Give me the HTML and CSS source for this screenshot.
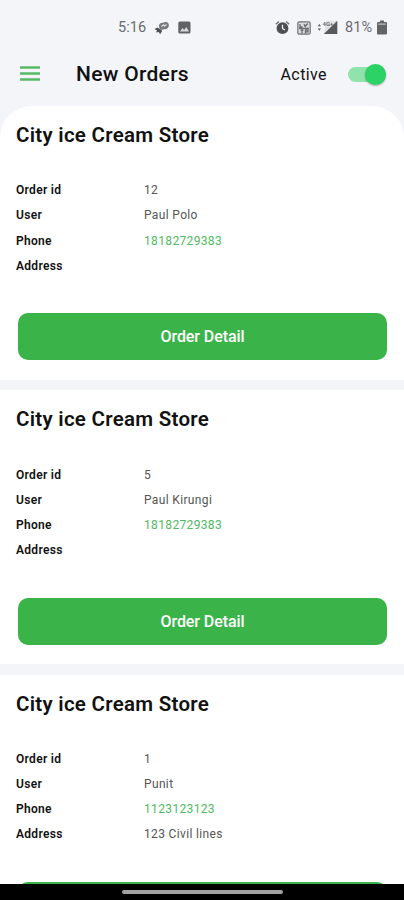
FILE: index.html
```html
<!DOCTYPE html>
<html lang="en">
<head>
<meta charset="utf-8">
<meta name="viewport" content="width=device-width, initial-scale=1">
<title>New Orders</title>
<link rel="stylesheet" href="styles.css">
</head>
<body>
<div class="screen">
  <div class="status">
    <div class="status-left">
      <span class="clock">5:16</span>
      <svg class="ico-leaf" width="16" height="14" viewBox="0 0 16 14">
        <path d="M5 4.500Q5.500 1.500 9 1.800L12 .8Q15.500 2 14.800 5.500Q13.500 8.500 10 8.200L7.500 9Q5 8 5 4.500Z" fill="#77797c"/>
        <path d="M7.500 5.500L9.500 3.800L10.500 5L12.500 3.500" fill="none" stroke="#d8dade" stroke-width="1.300"/>
        <path d="M.5 8L3.500 6.500L7.500 9L8 10.500L6 13.300L4.800 11L2 11.500L3 9.500Z" fill="#4f5255"/>
      </svg>
      <svg class="ico-image" width="13" height="13" viewBox="0 0 13 13">
        <rect x=".3" y=".5" width="12.200" height="12" rx="1.500" fill="#606366"/>
        <path d="M2 10.500L4.500 7L6.200 9L8.300 6L11 10.500Z" fill="#d8dade"/>
      </svg>
    </div>
    <div class="status-right">
      <svg width="15" height="15" viewBox="0 0 15 15">
        <circle cx="7.500" cy="8.200" r="5.900" fill="#4d4f52"/>
        <path d="M.8 4.200L4 1.400M14.200 4.200L11 1.400" stroke="#6a6c6f" stroke-width="1.300"/>
        <path d="M7.500 4.800V8.500L10 10" fill="none" stroke="#f0f2f6" stroke-width="1.300"/>
      </svg>
      <svg class="ico-lte" width="14" height="14" viewBox="0 0 14 14">
        <rect x=".8" y=".8" width="12.400" height="12.400" rx="1.500" fill="#d9dbdf" stroke="#707376" stroke-width="1.200"/>
        <path d="M3 3V6H5.500M7 3L8.200 5.500L10.800 2.500M2 7.300H12M3.500 9H6.500M5 9V12.500M8.500 12.500V9H11V10.800H8.500" fill="none" stroke="#696c6f" stroke-width="1.300"/>
      </svg>
      <svg class="ico-signal" width="21" height="15" viewBox="0 0 21 15">
        <path d="M.7 6.300H4L2.400 4ZM.7 8.500H4L2.400 10.800Z" fill="#55575a"/>
        <path d="M6.800 14L20.300 .8H9Z" fill="#dfe1e5"/>
        <path d="M20.300 .8V14H6.800Z" fill="#56585b"/>
        <text x="5.500" y="5.800" class="net">4G+</text>
      </svg>
      <span class="percent">81%</span>
      <svg class="ico-battery" width="10" height="15" viewBox="0 0 10 15">
        <path d="M3 .5H7V2H9Q10 2 10 3V13.500Q10 14.500 9 14.500H1Q0 14.500 0 13.500V3Q0 2 1 2H3Z" fill="#626467"/>
        <path d="M1.200 3.300H8.800V5H1.200Z" fill="#a6a8ab"/>
      </svg>
    </div>
  </div>
  <header class="appbar">
    <svg class="menu" width="20" height="15" viewBox="0 0 20 15">
      <path d="M0 1.500H20M0 7.500H20M0 13.500H20" stroke="#55b965" stroke-width="2.300"/>
    </svg>
    <h1>New Orders</h1>
    <span class="active">Active</span>
    <span class="switch"><span class="thumb"></span></span>
  </header>
  <main class="orders">
    <section class="card">
      <h2>City ice Cream Store</h2>
      <dl>
        <dt>Order id</dt><dd>12</dd>
        <dt>User</dt><dd>Paul Polo</dd>
        <dt>Phone</dt><dd class="phone">18182729383</dd>
        <dt>Address</dt><dd></dd>
      </dl>
      <button type="button">Order Detail</button>
    </section>
    <section class="card">
      <h2>City ice Cream Store</h2>
      <dl>
        <dt>Order id</dt><dd>5</dd>
        <dt>User</dt><dd>Paul Kirungi</dd>
        <dt>Phone</dt><dd class="phone">18182729383</dd>
        <dt>Address</dt><dd></dd>
      </dl>
      <button type="button">Order Detail</button>
    </section>
    <section class="card">
      <h2>City ice Cream Store</h2>
      <dl>
        <dt>Order id</dt><dd>1</dd>
        <dt>User</dt><dd>Punit</dd>
        <dt>Phone</dt><dd class="phone">1123123123</dd>
        <dt>Address</dt><dd>123 Civil lines</dd>
      </dl>
      <button type="button"></button>
    </section>
  </main>
  <div class="navbar"><span class="handle"></span></div>
</div>
</body>
</html>
```
FILE: styles.css
```css
* { box-sizing: border-box; }
body { margin: 0; }
.screen {
  display: flex;
  flex-direction: column;
  height: 900px;
  overflow: hidden;
  background: #f4f5f9;
  color: #111;
  font-family: Roboto, "Liberation Sans", sans-serif;
}
.status {
  flex: none;
  display: flex;
  justify-content: space-between;
  height: 54px;
  padding: 1px 17px 0 118px;
  color: #696b6f;
}
.status-left, .status-right { display: flex; align-items: center; }
.clock { width: 36px; font-size: 14.5px; letter-spacing: 0.1px; }
.ico-image { margin-left: 8px; }
.ico-lte { margin-left: 7px; }
.ico-signal { margin-left: 6px; }
.net { font: 700 6px Roboto, sans-serif; fill: #707276; }
.percent { margin-left: 7px; font-size: 14.5px; }
.ico-battery { margin-left: 5px; }
.appbar {
  flex: none;
  display: flex;
  align-items: center;
  height: 52px;
  padding: 0 18px 12px 20px;
}
.menu { margin-top: -1px; }
h1 {
  margin: 0 0 0 36px;
  font-size: 21px;
  font-weight: 500;
  line-height: 40px;
  letter-spacing: 0.3px;
}
.active { margin-left: auto; font-size: 16px; letter-spacing: 0.4px; }
.switch {
  display: flex;
  align-items: center;
  justify-content: flex-end;
  width: 38px;
  height: 15px;
  margin-left: 21px;
  border-radius: 8px;
  background: #8fe3ab;
}
.thumb {
  flex: none;
  width: 21px;
  height: 21px;
  border-radius: 50%;
  background: #2bd367;
  box-shadow: 0 1px 2px rgba(0, 0, 0, 0.3);
}
.orders {
  flex: 1;
  min-height: 0;
  display: flex;
  flex-direction: column;
  gap: 10.3px;
  overflow: hidden;
  border-radius: 32px 32px 0 0;
}
.card {
  flex: none;
  height: 274px;
  padding: 14px 17px 0 16px;
  background: #fff;
}
h2 {
  margin: 0;
  font-size: 20.5px;
  font-weight: 600;
  line-height: 30px;
  letter-spacing: 0.28px;
}
dl {
  display: grid;
  grid-template-columns: 128px 1fr;
  grid-auto-rows: 25.2px;
  margin: 28.3px 0 34.2px;
  line-height: 25px;
  font-size: 12px;
}
dt { font-weight: 600; letter-spacing: 0.3px; }
dd { margin: 0; color: #555; letter-spacing: 0.35px; }
dd.phone { color: #4fba63; }
button {
  display: block;
  width: 369px;
  height: 47px;
  margin-left: 2px;
  padding: 0;
  border: 0;
  border-radius: 10px;
  background: #3ab449;
  color: #fff;
  font-family: inherit;
  font-size: 16px;
  font-weight: 500;
  letter-spacing: -0.08px;
}
.navbar {
  flex: none;
  display: flex;
  justify-content: center;
  height: 16px;
  padding-top: 6px;
  background: #000;
}
.handle {
  width: 161px;
  height: 4px;
  border-radius: 2px;
  background: #a2a2a2;
}
```
